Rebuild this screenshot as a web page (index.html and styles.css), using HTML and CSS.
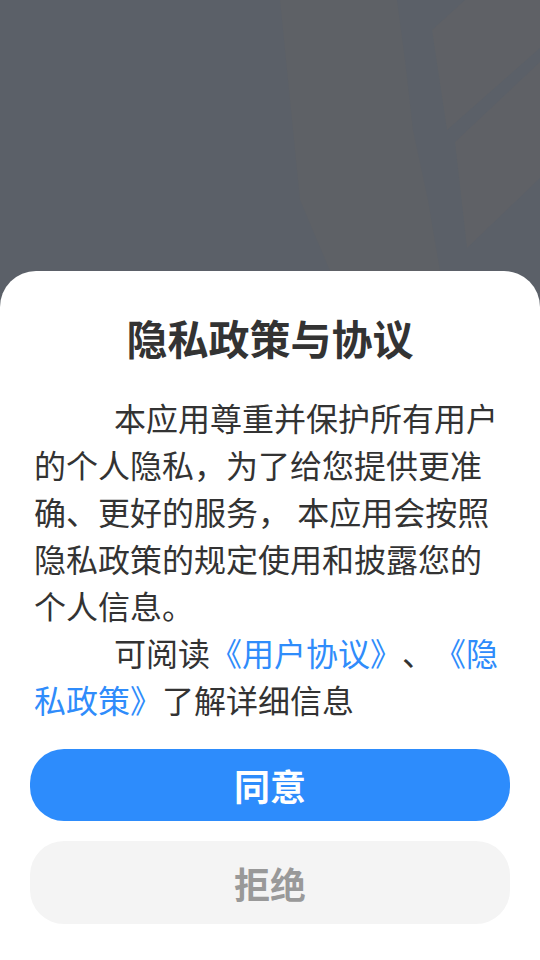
FILE: index.html
```html
<!DOCTYPE html>
<html lang="zh-CN">
<head>
<meta charset="utf-8">
<title>隐私政策与协议</title>
<link rel="stylesheet" href="styles.css">
</head>
<body>
<div class="page">
  <div class="hero">
    <svg class="hero-art" viewBox="0 0 540 271" preserveAspectRatio="none" xmlns="http://www.w3.org/2000/svg">
      <polygon points="280,0 397,0 405,60 413,130 428,200 440,271 330,271 300,200" fill="#5e6166"/>
      <polygon points="465,0 540,0 540,48 447,130 432,30" fill="#5f6166"/>
      <polygon points="455,142 540,62 540,178 467,248" fill="#5f6166"/>
    </svg>
  </div>
  <div class="sheet">
    <h1 class="title">隐私政策与协议</h1>
    <p class="para">本应用尊重并保护所有用户的个人隐私，为了给您提供更准确、更好的服务， 本应用会按照隐私政策的规定使用和披露您的个人信息。</p>
    <p class="para">可阅读<a class="link" href="#">《用户协议》</a>、<a class="link" href="#">《隐私政策》</a>了解详细信息</p>
    <div class="actions">
      <button class="btn btn-agree" type="button">同意</button>
      <button class="btn btn-reject" type="button">拒绝</button>
    </div>
  </div>
</div>
</body>
</html>
```

FILE: styles.css
```css
html, body {
  margin: 0;
  padding: 0;
}

body {
  background: #5b6068;
  font-family: "Noto Sans CJK SC", "Noto Sans", sans-serif;
  text-spacing-trim: space-all;
  font-feature-settings: "halt" 0, "chws" 0;
}

.page {
  width: 540px;
  height: 960px;
  display: flex;
  flex-direction: column;
  overflow: hidden;
}

.hero {
  flex: 0 0 271px;
  display: flex;
}

.hero-art {
  width: 540px;
  height: 271px;
  display: block;
}

.sheet {
  flex: 1;
  background: #ffffff;
  border-radius: 36px 36px 0 0;
  padding: 38px 34px 0;
  display: flex;
  flex-direction: column;
}

.title {
  margin: 0;
  text-align: center;
  font-size: 41px;
  line-height: 56px;
  font-weight: 700;
  color: #333333;
}

.para {
  margin: 0;
  font-size: 32px;
  line-height: 47px;
  color: #333333;
  text-indent: 80px;
  text-spacing-trim: space-all;
}

.sheet .title + .para {
  margin-top: 29px;
}

.link {
  color: #2f8cfb;
  text-decoration: none;
}

.actions {
  margin: 26px -4px 0;
  display: flex;
  flex-direction: column;
  gap: 20px;
}

.btn {
  border: none;
  margin: 0;
  padding: 0;
  width: 100%;
  font-family: "Noto Sans CJK SC", "Noto Sans", sans-serif;
  font-size: 36px;
  font-weight: 700;
  border-radius: 34px;
  display: flex;
  align-items: center;
  justify-content: center;
}

.btn-agree {
  height: 72px;
  background: #2d8cfc;
  color: #ffffff;
}

.btn-reject {
  height: 83px;
  background: #f4f4f4;
  color: #999999;
}
```
